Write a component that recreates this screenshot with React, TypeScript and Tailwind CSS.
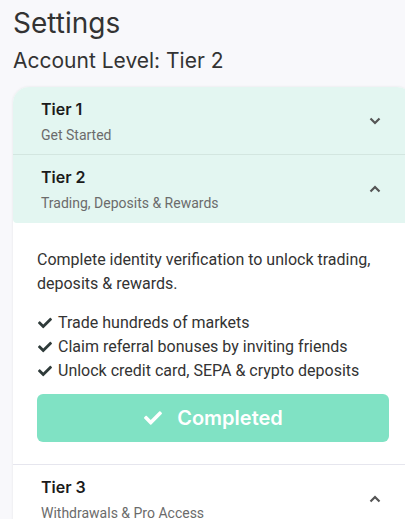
import { FaCheck } from "react-icons/fa";

function Chevron({ up }: { up?: boolean }) {
  return (
    <svg width="12" height="8" viewBox="0 0 12 8" className="text-[#555]">
      <polyline
        points={up ? "1.5,6.5 6,2 10.5,6.5" : "1.5,1.5 6,6 10.5,1.5"}
        fill="none"
        stroke="currentColor"
        strokeWidth="2.2"
      />
    </svg>
  );
}

function TierHeader({ title, sub, up, className }: { title: string; sub: string; up?: boolean; className: string }) {
  return (
    <div className={`flex items-center justify-between pl-7 pr-8 ${className}`}>
      <div className="flex flex-col pt-[2px]">
        <span className="font-['Inter'] font-semibold text-[16px] leading-5 text-[#1b1b1b]">{title}</span>
        <span className="font-['Roboto'] text-[14px] leading-5 mt-[6px] text-[#6b6b6b]">{sub}</span>
      </div>
      <Chevron up={up} />
    </div>
  );
}

export default function App() {
  const perks = [
    "Trade hundreds of markets",
    "Claim referral bonuses by inviting friends",
    "Unlock credit card, SEPA & crypto deposits",
  ];
  return (
    <div className="min-h-screen w-[405px] overflow-hidden bg-[#f8f8fb] font-['Roboto',sans-serif]">
      <div className="pl-[13px] pt-[5px]">
        <h1 className="font-['Inter'] text-[28px] leading-9 text-[#333]">Settings</h1>
        <h2 className="font-['Inter'] text-[21px] leading-7 mt-[6px] text-[#333]">Account Level: Tier 2</h2>
        <div className="mt-[12px] w-[400px] rounded-t-2xl bg-white shadow-[0_0_3px_rgba(0,0,0,0.08)]">
          <TierHeader title="Tier 1" sub="Get Started" className="h-[68px] bg-[#e3f6f1] rounded-t-2xl border-b border-[#d3e6e0]" />
          <TierHeader title="Tier 2" sub="Trading, Deposits & Rewards" up className="h-[68px] bg-[#e3f6f1] rounded-b" />
          <div className="px-6 pt-[25px] pb-[22px] border-b border-[#e6e6ee]">
            <p className="text-[16px] leading-6 text-[#333]">
              Complete identity verification to unlock trading, deposits &amp; rewards.
            </p>
            <ul className="mt-[15px] text-[16px] leading-6 text-[#333]">
              {perks.map((p) => (
                <li key={p} className="flex items-center gap-[5px]">
                  <FaCheck className="text-[#2f3b3a] w-[16px] h-[14px]" />
                  {p}
                </li>
              ))}
            </ul>
            <button className="mt-[11px] w-full h-12 rounded-md bg-[#80e2c4] flex items-center justify-center gap-[14px] text-white">
              <FaCheck className="w-[20px] h-[18px]" />
              <span className="font-['Inter'] font-semibold text-[20px]">Completed</span>
            </button>
          </div>
          <TierHeader title="Tier 3" sub="Withdrawals & Pro Access" up className="h-[68px] bg-white" />
        </div>
      </div>
    </div>
  );
}
